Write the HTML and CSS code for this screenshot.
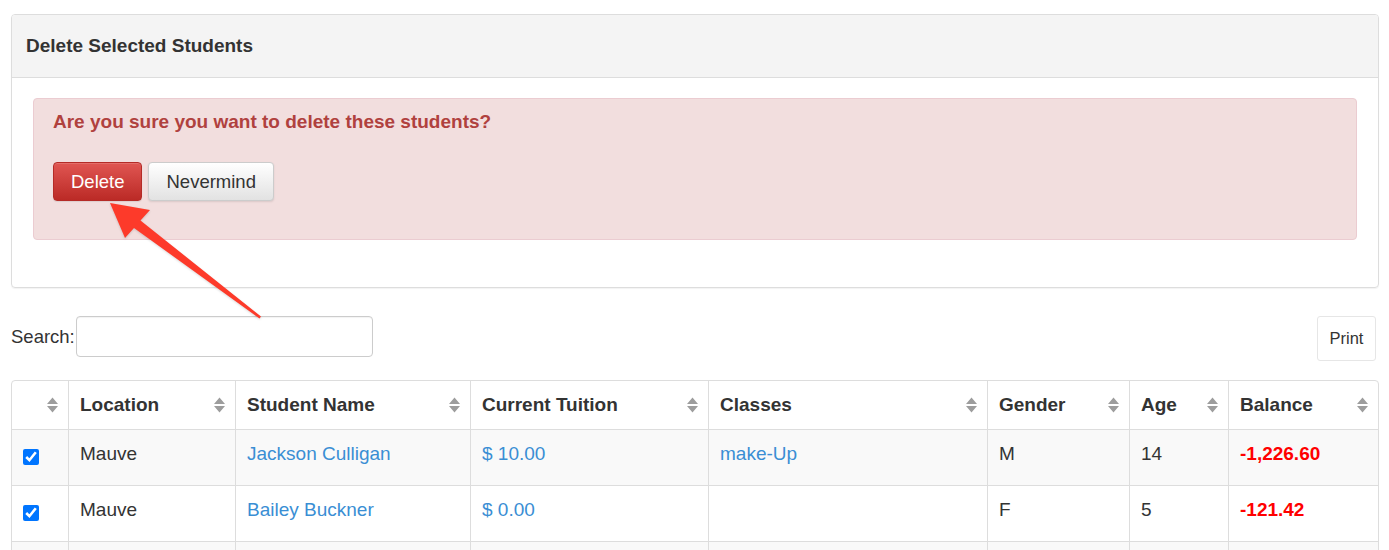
FILE: index.html
```html
<!DOCTYPE html>
<html lang="en">
<head>
  <meta charset="UTF-8">
  <meta name="viewport" content="width=device-width, initial-scale=1.0">
  <title>Students</title>
  <link rel="stylesheet" href="styles.css">
</head>
<body>

  <div class="page">

    <div class="panel">
      <div class="panel-heading">Delete Selected Students</div>
      <div class="panel-body">
        <div class="alert">
          <h4>Are you sure you want to delete these students?</h4>
          <div class="actions">
            <button class="btn btn-danger">Delete</button>
            <button class="btn btn-default">Nevermind</button>
          </div>
        </div>
      </div>
    </div>

    <div class="toolbar">
      <label class="search">Search:<input type="text"></label>
      <button class="btn-print">Print</button>
    </div>

    <table class="students">
      <colgroup>
        <col style="width:56px">
        <col style="width:167px">
        <col style="width:235px">
        <col style="width:238px">
        <col style="width:279px">
        <col style="width:142px">
        <col style="width:99px">
        <col style="width:150px">
      </colgroup>
      <thead>
        <tr>
          <th><div class="th"><svg class="sort" viewBox="0 0 11 16"><path d="M5.5 0.5 L11 7 L0 7 Z M0 9 L11 9 L5.5 15.5 Z"/></svg></div></th>
          <th><div class="th">Location<svg class="sort" viewBox="0 0 11 16"><path d="M5.5 0.5 L11 7 L0 7 Z M0 9 L11 9 L5.5 15.5 Z"/></svg></div></th>
          <th><div class="th">Student Name<svg class="sort" viewBox="0 0 11 16"><path d="M5.5 0.5 L11 7 L0 7 Z M0 9 L11 9 L5.5 15.5 Z"/></svg></div></th>
          <th><div class="th">Current Tuition<svg class="sort" viewBox="0 0 11 16"><path d="M5.5 0.5 L11 7 L0 7 Z M0 9 L11 9 L5.5 15.5 Z"/></svg></div></th>
          <th><div class="th">Classes<svg class="sort" viewBox="0 0 11 16"><path d="M5.5 0.5 L11 7 L0 7 Z M0 9 L11 9 L5.5 15.5 Z"/></svg></div></th>
          <th><div class="th">Gender<svg class="sort" viewBox="0 0 11 16"><path d="M5.5 0.5 L11 7 L0 7 Z M0 9 L11 9 L5.5 15.5 Z"/></svg></div></th>
          <th><div class="th">Age<svg class="sort" viewBox="0 0 11 16"><path d="M5.5 0.5 L11 7 L0 7 Z M0 9 L11 9 L5.5 15.5 Z"/></svg></div></th>
          <th><div class="th">Balance<svg class="sort" viewBox="0 0 11 16"><path d="M5.5 0.5 L11 7 L0 7 Z M0 9 L11 9 L5.5 15.5 Z"/></svg></div></th>
        </tr>
      </thead>
      <tbody>
        <tr>
          <td><input type="checkbox" checked></td>
          <td>Mauve</td>
          <td><a href="#">Jackson Culligan</a></td>
          <td><a href="#">$ 10.00</a></td>
          <td><a href="#">make-Up</a></td>
          <td>M</td>
          <td>14</td>
          <td class="balance">-1,226.60</td>
        </tr>
        <tr>
          <td><input type="checkbox" checked></td>
          <td>Mauve</td>
          <td><a href="#">Bailey Buckner</a></td>
          <td><a href="#">$ 0.00</a></td>
          <td></td>
          <td>F</td>
          <td>5</td>
          <td class="balance">-121.42</td>
        </tr>
        <tr class="filler">
          <td></td>
          <td></td>
          <td></td>
          <td></td>
          <td></td>
          <td></td>
          <td></td>
          <td></td>
        </tr>
      </tbody>
    </table>

  </div>

  <svg class="callout" width="1389" height="550" viewBox="0 0 1389 550">
    <polygon points="110,203 150,210 140.5,220.5 261,316.5 259.5,318.5 134,228 125,238"/>
  </svg>

</body>
</html>
```

FILE: styles.css
```css
html {
  overflow: hidden;
}
body {
  font-family: "Liberation Sans", Arial, sans-serif;
  color: #333;
  background-color: #fff;
  margin: 0;
  padding: 0;
}
.page {
  padding: 14px 10px 0 11px;
}
.panel {
  border: 1px solid #ddd;
  border-radius: 4px;
  box-shadow: 0 1px 1px rgba(0, 0, 0, 0.05);
}
.panel-heading {
  background-color: #f4f4f4;
  border-bottom: 1px solid #ddd;
  border-radius: 3px 3px 0 0;
  padding: 17px 14px 18px;
  font-size: 19px;
  line-height: 27px;
  font-weight: bold;
  color: #333;
}
.panel-body {
  padding: 20px 21px 47px;
}
.alert {
  background-color: #f2dede;
  border: 1px solid #ebccd1;
  border-radius: 4px;
  padding: 9px 19px 38px;
}
.alert h4 {
  margin: 0;
  font-size: 19px;
  line-height: 27px;
  font-weight: bold;
  color: #b0413e;
}
.actions {
  margin-top: 27px;
  display: flex;
  gap: 6px;
}
.btn {
  font-family: inherit;
  font-size: 18.5px;
  line-height: 27px;
  padding: 5px 17px;
  border-radius: 4px;
  cursor: pointer;
}
.btn-danger {
  color: #fff;
  background-image: linear-gradient(to bottom, #e05652, #bb2a26);
  border: 1px solid #b52b27;
  box-shadow: inset 0 1px 0 rgba(255, 255, 255, 0.15), 0 1px 1px rgba(0, 0, 0, 0.08);
}
.btn-default {
  color: #333;
  background-image: linear-gradient(to bottom, #fff, #e2e2e2);
  border: 1px solid #ccc;
  box-shadow: 0 1px 2px rgba(0, 0, 0, 0.1);
}
.toolbar {
  display: flex;
  justify-content: space-between;
  align-items: flex-start;
  margin-top: 28px;
  padding-right: 3px;
}
.search {
  display: flex;
  align-items: center;
  font-size: 18.5px;
  height: 41px;
  color: #333;
}
.search input {
  width: 297px;
  height: 41px;
  box-sizing: border-box;
  margin-left: 1px;
  border: 1px solid #ccc;
  border-radius: 4px;
  box-shadow: inset 0 1px 1px rgba(0, 0, 0, 0.05);
  font-size: 18px;
  padding: 0 10px;
}
.btn-print {
  font-family: inherit;
  font-size: 16.5px;
  color: #333;
  background-color: #fff;
  border: 1px solid #e6e6e6;
  border-radius: 3px;
  width: 59px;
  height: 45px;
  padding: 0;
  cursor: pointer;
}
.students {
  margin-top: 19px;
  width: 100%;
  table-layout: fixed;
  border-collapse: separate;
  border-spacing: 0;
  border: 1px solid #ddd;
  border-radius: 4px;
  font-size: 19px;
  line-height: 27px;
}
.students th {
  text-align: left;
  font-weight: bold;
  padding: 10px 10px 11px 11px;
  border-left: 1px solid #ddd;
  vertical-align: top;
}
.students td {
  padding: 10px 11px 18px;
  border-left: 1px solid #ddd;
  border-top: 1px solid #ddd;
  vertical-align: top;
}
.students .filler td {
  height: 27px;
}
.students th:first-child,
.students td:first-child {
  border-left: none;
}
.students tbody tr:nth-child(odd) td {
  background-color: #f9f9f9;
}
.th {
  display: flex;
  align-items: center;
  justify-content: space-between;
  min-height: 27px;
  white-space: nowrap;
}
.sort {
  width: 11px;
  height: 16px;
  margin-left: auto;
  fill: #9d9d9d;
  flex-shrink: 0;
}
.students input[type="checkbox"] {
  width: 16px;
  height: 16px;
  margin: 9px 0 0 0;
  vertical-align: top;
}
.students a {
  color: #3a8ed4;
  text-decoration: none;
}
.balance {
  color: #ff0000;
  font-weight: bold;
}
.callout {
  position: absolute;
  top: 0;
  left: 0;
  pointer-events: none;
  fill: #fd3a2a;
  filter: drop-shadow(0 1px 1px rgba(0, 0, 0, 0.15));
}
```
